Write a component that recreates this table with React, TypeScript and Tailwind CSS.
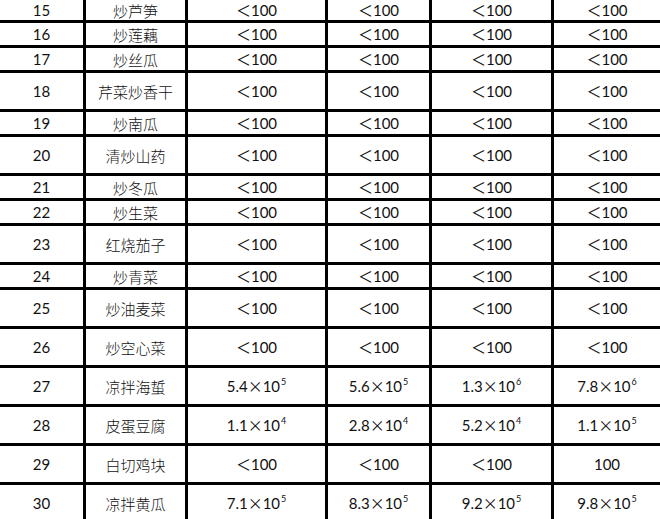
import React from "react";

type Row = { no: number; name: string; vals: React.ReactNode[]; tall: boolean };

const LT = "＜100";

// scientific value, e.g. sci("5.4", 5) -> 5.4×10^5
const sci = (m: string, e: number) => (
    <span>
        {m}
        <span className="font-['Noto_Sans_CJK_SC']">×</span>10
        <sup className="text-[9px] top-[-7px] ml-[1px]">{e}</sup>
    </span>
);

const rows: Row[] = [
    { no: 15, name: "炒芦笋", vals: [LT, LT, LT, LT], tall: false },
    { no: 16, name: "炒莲藕", vals: [LT, LT, LT, LT], tall: false },
    { no: 17, name: "炒丝瓜", vals: [LT, LT, LT, LT], tall: false },
    { no: 18, name: "芹菜炒香干", vals: [LT, LT, LT, LT], tall: true },
    { no: 19, name: "炒南瓜", vals: [LT, LT, LT, LT], tall: false },
    { no: 20, name: "清炒山药", vals: [LT, LT, LT, LT], tall: true },
    { no: 21, name: "炒冬瓜", vals: [LT, LT, LT, LT], tall: false },
    { no: 22, name: "炒生菜", vals: [LT, LT, LT, LT], tall: false },
    { no: 23, name: "红烧茄子", vals: [LT, LT, LT, LT], tall: true },
    { no: 24, name: "炒青菜", vals: [LT, LT, LT, LT], tall: false },
    { no: 25, name: "炒油麦菜", vals: [LT, LT, LT, LT], tall: true },
    { no: 26, name: "炒空心菜", vals: [LT, LT, LT, LT], tall: true },
    { no: 27, name: "凉拌海蜇", vals: [sci("5.4", 5), sci("5.6", 5), sci("1.3", 6), sci("7.8", 6)], tall: true },
    { no: 28, name: "皮蛋豆腐", vals: [sci("1.1", 4), sci("2.8", 4), sci("5.2", 4), sci("1.1", 5)], tall: true },
    { no: 29, name: "白切鸡块", vals: [LT, LT, LT, "100"], tall: true },
    { no: 30, name: "凉拌黄瓜", vals: [sci("7.1", 5), sci("8.3", 5), sci("9.2", 5), sci("9.8", 5)], tall: true },
];

export default function App() {
    const rowHeights = rows.map((r, i) => (i === 0 ? "20px" : r.tall ? "36px" : "22px")).join(" ");

    return (
        <div className="w-[660px] h-[519px] overflow-hidden bg-white">
            <div
                className="grid grid-cols-[83px_99px_137px_101px_119px_106px] gap-[3px] bg-black text-[15px] leading-none text-[#111] font-['Lato','Noto_Sans_CJK_SC',sans-serif]"
                style={{ gridTemplateRows: rowHeights }}
            >
                {rows.map((r) => (
                    <React.Fragment key={r.no}>
                        <div className="bg-white flex items-center justify-center">{r.no}</div>
                        <div className="bg-white flex items-center justify-center font-['Noto_Sans_CJK_SC',sans-serif] font-light text-[15px]">
                            {r.name}
                        </div>
                        {r.vals.map((v, j) => (
                            <div key={j} className="bg-white flex items-center justify-center">
                                {v}
                            </div>
                        ))}
                    </React.Fragment>
                ))}
            </div>
        </div>
    );
}
